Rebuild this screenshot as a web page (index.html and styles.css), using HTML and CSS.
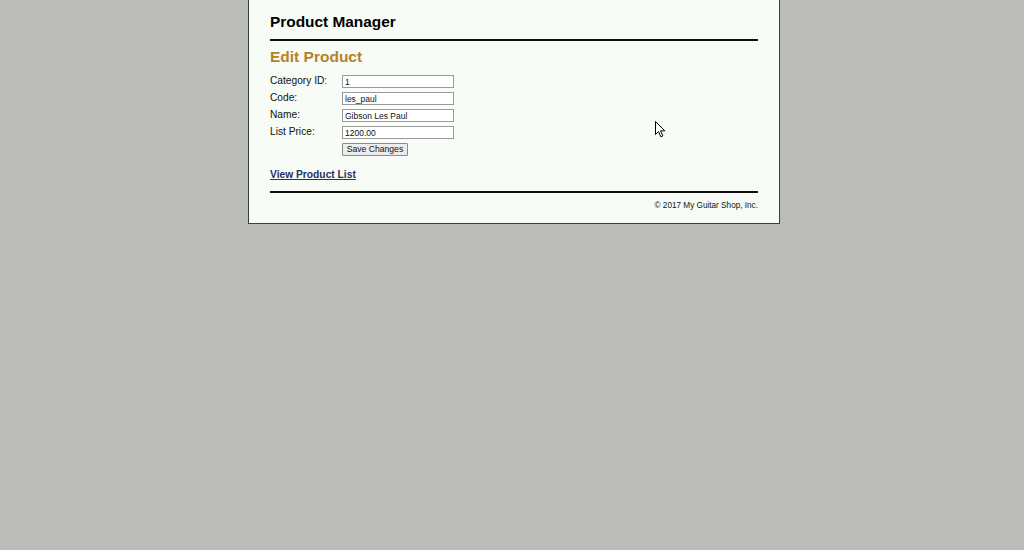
FILE: index.html
```html
<!DOCTYPE html>
<html>
<head>
<meta charset="utf-8">
<title>My Guitar Shop</title>
<link rel="stylesheet" href="styles.css">
</head>
<body>
<div class="page">
  <header class="head">
    <h1>Product Manager</h1>
  </header>
  <main class="main">
    <h2>Edit Product</h2>
    <form class="form">
      <label>Category ID:</label>
      <input type="text" value="1">
      <label>Code:</label>
      <input type="text" value="les_paul">
      <label>Name:</label>
      <input type="text" value="Gibson Les Paul">
      <label>List Price:</label>
      <input type="text" value="1200.00">
      <span></span>
      <button type="button">Save Changes</button>
    </form>
    <p class="links"><a href="#">View Product List</a></p>
  </main>
  <footer class="foot">
    <p>&copy; 2017 My Guitar Shop, Inc.</p>
  </footer>
</div>
<svg class="cursor" width="12" height="18" viewBox="0 0 12 18">
  <path d="M0.5 0.5 L0.5 13.5 L3.5 10.5 L5.8 15.8 L7.8 14.9 L5.6 9.8 L9.8 9.8 Z" fill="#fff" stroke="#000" stroke-width="1"/>
</svg>
</body>
</html>
```
FILE: styles.css
```css
html, body {
  margin: 0;
  padding: 0;
  background: #bbbdb8;
  font-family: "Liberation Sans", Arial, sans-serif;
}
.page {
  box-sizing: border-box;
  width: 532px;
  margin-left: 248px;
  background: #f7fcf7;
  border: 1px solid #3e3e3e;
  border-top: none;
  padding: 0 21px 12px 21px;
}
.head {
  padding-top: 13px;
  padding-bottom: 8px;
  border-bottom: 2px solid #111;
}
.head h1 {
  margin: 0;
  font-size: 15.4px;
  line-height: 18px;
  font-weight: bold;
  color: #000;
}
.main {
  padding-top: 7px;
  border-bottom: 2px solid #111;
  padding-bottom: 10px;
}
.main h2 {
  margin: 0 0 9px 0;
  font-size: 15.5px;
  line-height: 18px;
  font-weight: bold;
  color: #b5812a;
}
.form {
  display: grid;
  grid-template-columns: 72px 112px;
  row-gap: 4px;
  align-items: start;
}
.form label {
  font-size: 10.2px;
  line-height: 12px;
  color: #111;
}
.form input {
  box-sizing: border-box;
  width: 112px;
  height: 13px;
  margin: 0;
  padding: 0 2px;
  border: 1px solid #9a9a9a;
  background: #fff;
  font-family: "Liberation Sans", Arial, sans-serif;
  font-size: 8.5px;
  color: #111;
}
.form button {
  justify-self: start;
  box-sizing: border-box;
  width: 66px;
  height: 13px;
  margin: 0;
  padding: 0;
  border: 1px solid #8a8a8a;
  border-radius: 1px;
  background: #ececec;
  font-family: "Liberation Sans", Arial, sans-serif;
  font-size: 8.6px;
  line-height: 11px;
  color: #111;
}
.links {
  margin: 13px 0 0 0;
  font-size: 10.25px;
  line-height: 12px;
  font-weight: bold;
}
.links a {
  color: #2b3060;
  text-decoration: underline;
}
.foot {
  padding-top: 8px;
}
.foot p {
  margin: 0;
  text-align: right;
  font-size: 8.2px;
  line-height: 10px;
  color: #111;
}
.cursor {
  position: absolute;
  left: 655px;
  top: 121px;
}
```
